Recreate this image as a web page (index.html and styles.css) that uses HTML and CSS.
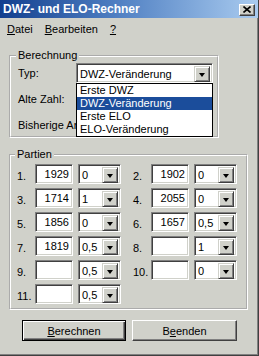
FILE: index.html
```html
<!DOCTYPE html>
<html lang="de">
<head>
    <meta charset="UTF-8">
    <title>DWZ- und ELO-Rechner</title>
    <link rel="stylesheet" href="styles.css">
</head>
<body>

    <div class="window">
        <div class="titlebar">
            <span class="title">DWZ- und ELO-Rechner</span>
            <span class="close-btn">
                <svg width="8" height="7" viewBox="0 0 8 7">
                    <path d="M0.5 0.5 L7.5 6.5 M7.5 0.5 L0.5 6.5" stroke="#000" stroke-width="1.6" fill="none"/>
                </svg>
            </span>
        </div>

        <div class="menubar">
            <span class="menu-item"><u>D</u>atei</span>
            <span class="menu-item"><u>B</u>earbeiten</span>
            <span class="menu-item"><u>?</u></span>
        </div>

        <fieldset class="group group-calc">
            <legend>Berechnung</legend>
            <div class="field">
                <label>Typ:</label>
                <div class="combo combo-type">
                    <span class="combo-value">DWZ-Veränderung</span>
                    <span class="combo-arrow"></span>
                    <!-- open dropdown list, covers the fields below -->
                    <ul class="droplist">
                        <li>Erste DWZ</li>
                        <li class="selected">DWZ-Veränderung</li>
                        <li>Erste ELO</li>
                        <li>ELO-Veränderung</li>
                    </ul>
                </div>
            </div>
            <div class="field">
                <label>Alte Zahl:</label>
            </div>
            <div class="field">
                <label>Bisherige Anzahl:</label>
            </div>
        </fieldset>

        <fieldset class="group group-games">
            <legend>Partien</legend>
            <div class="games" id="games"></div>
        </fieldset>

        <div class="buttons">
            <button class="btn btn-default"><u>B</u>erechnen</button>
            <button class="btn">B<u>e</u>enden</button>
        </div>
    </div>

    <script>
        const games = [
            ['1929', '0'], ['1902', '0'],
            ['1714', '1'], ['2055', '0'],
            ['1856', '0'], ['1657', '0,5'],
            ['1819', '0,5'], ['', '1'],
            ['', '0,5'], ['', '0'],
            ['', '0,5']
        ];

        const container = document.getElementById('games');
        games.forEach((game, i) => {
            const row = document.createElement('div');
            row.className = 'game';
            row.innerHTML =
                '<span class="game-no">' + (i + 1) + '.</span>' +
                '<span class="edit">' + game[0] + '</span>' +
                '<span class="combo combo-small"><span class="combo-value">' + game[1] + '</span><span class="combo-arrow"></span></span>';
            container.appendChild(row);
        });
    </script>

</body>
</html>
```

FILE: styles.css
```css
body {
    margin: 0;
    padding: 0;
    background-color: #d0d1ca;
    font-family: "Liberation Sans", Arial, sans-serif;
    font-size: 11px;
    line-height: 13px;
    color: #000;
}
.window {
    width: 258px;
    height: 355px;
    border-right: 1px solid #404040;
    border-bottom: 1px solid #404040;
    box-shadow: inset -1px -1px #808080;
    background-color: #d0d1ca;
    overflow: hidden;
}
.titlebar {
    display: flex;
    align-items: center;
    justify-content: space-between;
    height: 18px;
    padding: 0 3px 0 3px;
    background: linear-gradient(to right, #123f8e 0%, #4f7fc2 45%, #a9cbef 100%);
}
.title {
    color: #fff;
    font-weight: bold;
    font-size: 12px;
}
.close-btn {
    display: flex;
    align-items: center;
    justify-content: center;
    width: 14px;
    height: 10px;
    margin-top: 1px;
    background-color: #d0d1ca;
    border: 1px solid;
    border-color: #fff #404040 #404040 #fff;
    box-shadow: inset -1px -1px #808080;
}
.menubar {
    display: flex;
    height: 14px;
    padding: 5px 0 0 7px;
    gap: 12px;
}
.group {
    margin: 12px 0 0 9px;
    border: 2px groove #fff;
    padding: 0 4px 1px 7px;
    position: relative;
}
.group legend {
    padding: 0 2px;
    margin-left: -2px;
}
.group-calc {
    width: 193px;
}
.field {
    display: flex;
    align-items: center;
    height: 20px;
    margin-top: 6px;
}
.field:first-of-type {
    margin-top: 1px;
}
.field label {
    width: 57px;
    white-space: nowrap;
}
.combo {
    display: flex;
    background-color: #fff;
    border: 1px solid;
    border-color: #808080 #fff #fff #808080;
    box-shadow: inset 1px 1px #404040, inset -1px -1px #d0d1ca;
    padding: 2px;
    box-sizing: border-box;
    position: relative;
}
.combo-value {
    flex: 1;
    padding-left: 1px;
    line-height: 16px;
    white-space: nowrap;
    overflow: hidden;
}
.combo-arrow {
    width: 14px;
    height: 14px;
    background-color: #d0d1ca;
    border: 1px solid;
    border-color: #d0d1ca #404040 #404040 #d0d1ca;
    box-shadow: inset 1px 1px #fff, inset -1px -1px #808080;
    position: relative;
}
.combo-arrow::after {
    content: "";
    position: absolute;
    left: 4px;
    top: 6px;
    border-left: 3.5px solid transparent;
    border-right: 3.5px solid transparent;
    border-top: 4px solid #000;
}
.combo-type {
    width: 137px;
    height: 20px;
    margin-left: 1px;
}
.droplist {
    list-style: none;
    margin: 0;
    padding: 0;
    position: absolute;
    top: 19px;
    left: -1px;
    width: 135px;
    background-color: #fff;
    border: 1px solid #000;
    z-index: 2;
}
.droplist li {
    height: 13px;
    line-height: 13px;
    padding-left: 3px;
}
.droplist li.selected {
    background-color: #1b4d9b;
    color: #fff;
}
.group-games {
    margin-top: 10px;
    width: 225px;
    padding: 3px 4px 4px 6px;
}
.games {
    display: grid;
    grid-template-columns: 104px 104px;
    column-gap: 12px;
    row-gap: 4px;
}
.game {
    display: flex;
    align-items: flex-end;
    height: 20px;
}
.game-no {
    width: 18px;
    padding-bottom: 1px;
}
.edit {
    width: 38px;
    height: 20px;
    box-sizing: border-box;
    background-color: #fff;
    border: 1px solid;
    border-color: #808080 #fff #fff #808080;
    box-shadow: inset 1px 1px #404040, inset -1px -1px #d0d1ca;
    text-align: right;
    padding: 2px 3px 0 0;
    line-height: 14px;
}
.combo-small {
    width: 43px;
    height: 20px;
    margin-left: 5px;
}
.buttons {
    display: flex;
    gap: 6px;
    margin: 10px 0 0 22px;
}
.btn {
    width: 105px;
    height: 21px;
    font-family: inherit;
    font-size: 11px;
    background-color: #d0d1ca;
    border: 1px solid;
    border-color: #fff #404040 #404040 #fff;
    box-shadow: inset -1px -1px #808080;
    padding: 0;
    color: #000;
}
.btn-default {
    width: 104px;
    border: 1px solid #000;
    box-shadow: inset 1px 1px #fff, inset -1px -1px #404040, inset -2px -2px #808080;
}
```
